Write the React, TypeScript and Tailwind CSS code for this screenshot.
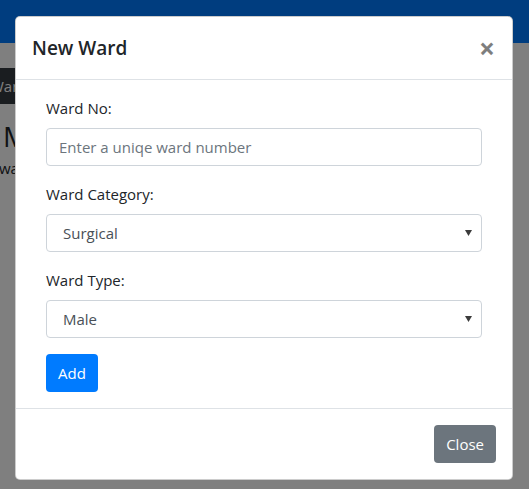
export default function App() {
  return (
    <div className="relative w-[529px] h-[489px] overflow-hidden bg-white text-[#212529] font-['Open_Sans',sans-serif] text-[15px]">
      {/* Page behind the modal */}
      <div className="h-[43px] bg-[#007bff]" />
      <div className="pt-[25px]">
        <div className="-ml-[22px] inline-block bg-[#343a40] text-white px-3 py-[6px] rounded leading-6 whitespace-nowrap">
          Wards
        </div>
        <h2 className="ml-[3px] mt-[14px] text-[28px] font-medium leading-[36px] whitespace-nowrap">Manage Wards</h2>
        <p className="-ml-[1px] mt-[2px] leading-6 whitespace-nowrap">wards list</p>
      </div>

      {/* Backdrop */}
      <div className="absolute inset-0 bg-black/50" />

      {/* Modal */}
      <div className="absolute inset-0">
        <div className="ml-[15px] mt-[16px] w-[498px] bg-white border border-black/20 rounded-[5px]">
          <div className="flex items-start justify-between p-4 border-b border-[#dee2e6]">
            <h5 className="text-[19px] font-semibold leading-[30px]">New Ward</h5>
            <button className="-m-4 p-4 pr-[17px] text-[28px] font-bold leading-[30px] text-black opacity-50 [text-shadow:0_1px_0_#fff]">
              ×
            </button>
          </div>

          <div className="px-[30px] py-4">
            <div className="mb-4">
              <label className="block mb-2 leading-6">Ward No:</label>
              <input
                className="block w-full h-[38px] px-3 border border-[#ced4da] rounded text-[15px] text-[#495057] placeholder:text-[#6c757d] outline-none"
                placeholder="Enter a uniqe ward number"
              />
            </div>
            <div className="mb-4">
              <label className="block mb-2 leading-6">Ward Category:</label>
              <div className="relative">
                <div className="flex items-center w-full h-[38px] px-4 border border-[#ced4da] rounded text-[#495057]">
                  Surgical
                </div>
                <svg className="absolute right-[10px] top-[16px]" width="7" height="6" viewBox="0 0 7 6">
                  <path d="M0 0h7L3.5 6z" fill="#3c3c3c" />
                </svg>
              </div>
            </div>
            <div className="mb-4">
              <label className="block mb-2 leading-6">Ward Type:</label>
              <div className="relative">
                <div className="flex items-center w-full h-[38px] px-4 border border-[#ced4da] rounded text-[#495057]">
                  Male
                </div>
                <svg className="absolute right-[10px] top-[16px]" width="7" height="6" viewBox="0 0 7 6">
                  <path d="M0 0h7L3.5 6z" fill="#3c3c3c" />
                </svg>
              </div>
            </div>
            <button className="h-[38px] px-3 bg-[#007bff] text-white rounded leading-6">
              Add
            </button>
          </div>

          <div className="flex justify-end px-3 py-3 border-t border-[#dee2e6]">
            <button className="m-1 h-[38px] px-3 bg-[#6c757d] text-white rounded leading-6">
              Close
            </button>
          </div>
        </div>
      </div>
    </div>
  );
}
